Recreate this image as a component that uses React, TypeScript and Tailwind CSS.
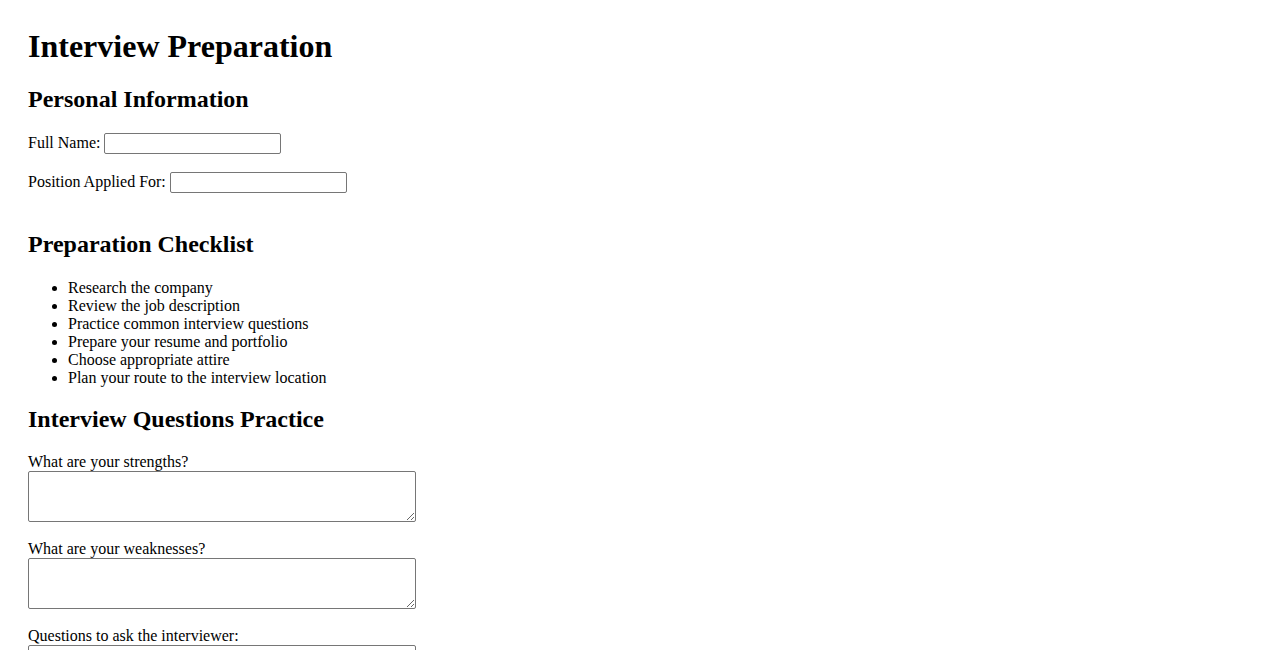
import React from 'react';

const checklist = [
  'Research the company',
  'Review the job description',
  'Practice common interview questions',
  'Prepare your resume and portfolio',
  'Choose appropriate attire',
  'Plan your route to the interview location',
];

const questions = [
  'What are your strengths?',
  'What are your weaknesses?',
  'Questions to ask the interviewer:',
];

function Field({ label, className = '' }: { label: string; className?: string }) {
  return (
    <div className={`flex items-start ${className}`}>
      <span className="mt-[1px] mr-[4px] leading-[18px]">{label}</span>
      <input
        type="text"
        className="w-[177px] h-[21px] border border-[#767676] rounded-[2px] bg-white px-[2px] text-[13px]"
      />
    </div>
  );
}

export default function App() {
  return (
    <div
      className="min-h-screen bg-white text-black px-[28px] pt-[28px] text-[16px]"
      style={{ fontFamily: '"Liberation Serif", "Times New Roman", serif' }}
    >
      <h1 className="text-[32px] font-bold leading-[37px]">Interview Preparation</h1>

      {/* Personal info */}
      <h2 className="mt-[20px] text-[24px] font-bold leading-[28px]">Personal Information</h2>
      <Field label="Full Name:" className="mt-[20px]" />
      <Field label="Position Applied For:" className="mt-[18px]" />

      {/* Checklist */}
      <h2 className="mt-[37px] text-[24px] font-bold leading-[28px]">Preparation Checklist</h2>
      <ul className="mt-[21px] list-disc pl-[40px] leading-[18px]">
        {checklist.map((item) => (
          <li key={item}>{item}</li>
        ))}
      </ul>

      {/* Practice */}
      <h2 className="mt-[18px] text-[24px] font-bold leading-[28px]">Interview Questions Practice</h2>
      {questions.map((q, i) => (
        <div key={q} className={i === 0 ? 'mt-[20px]' : 'mt-[18px]'}>
          <label className="block leading-[18px]">{q}</label>
          <textarea className="block w-[388px] h-[51px] border border-[#767676] rounded-[2px] bg-white" />
        </div>
      ))}
    </div>
  );
}
